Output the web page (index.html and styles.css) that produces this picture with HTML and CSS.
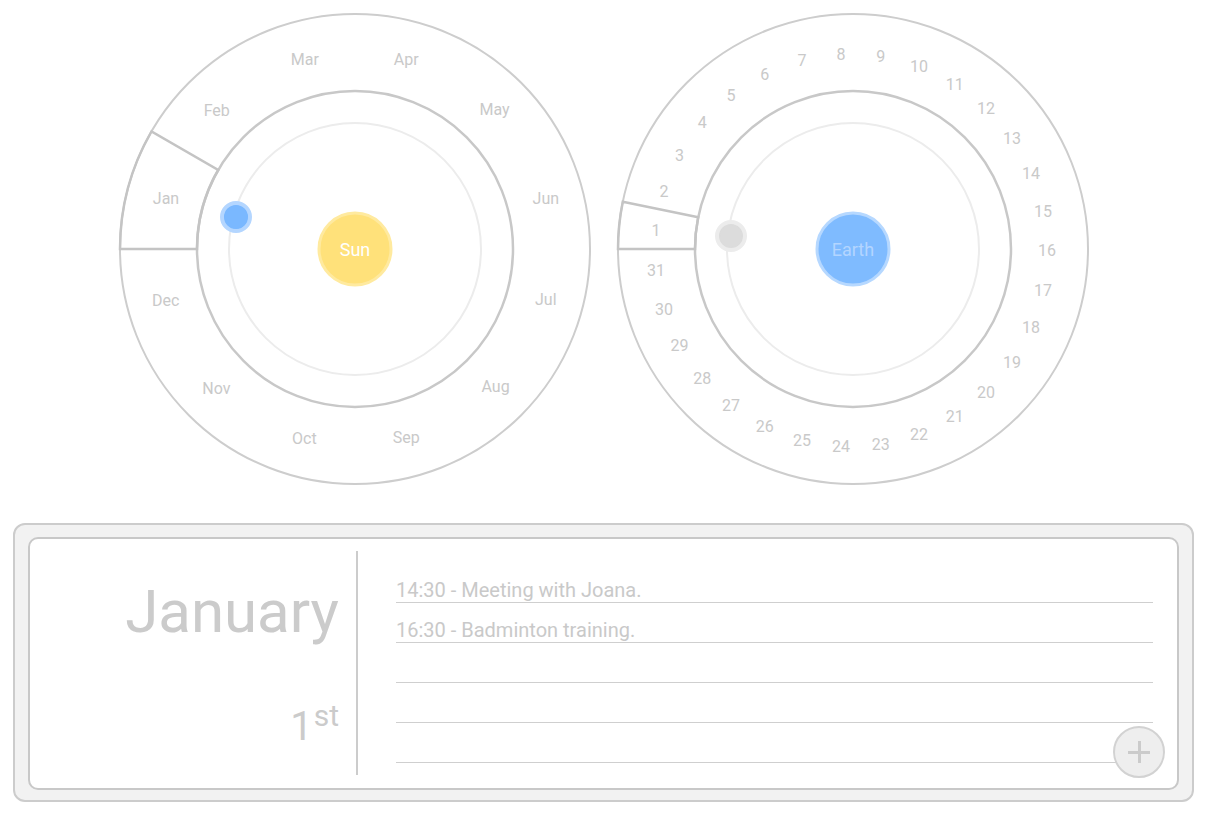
FILE: index.html
```html
<!DOCTYPE html>
<html>
<head>
<meta charset="utf-8">
<link rel="stylesheet" href="styles.css">
</head>
<body>
<div class="orbits">
  <svg class="dial" width="474" height="474" viewBox="-237 -237 474 474">
    <circle class="ring-outer" r="235"/>
    <circle class="ring-inner" r="158"/>
    <circle class="ring-faint" r="126"/>
    <path class="sector" d="M -235 0 A 235 235 0 0 1 -203.52 -117.5 L -136.83 -79 A 158 158 0 0 0 -158 0 Z"/>
    <g class="labels">
      <text x="-189" y="-50.7">Jan</text>
      <text x="-138.3" y="-138.6">Feb</text>
      <text x="-50.2" y="-189.3">Mar</text>
      <text x="51.2" y="-189.3">Apr</text>
      <text x="139.6" y="-139.6">May</text>
      <text x="190.8" y="-50.7">Jun</text>
      <text x="190.8" y="50.7">Jul</text>
      <text x="140.6" y="137.6">Aug</text>
      <text x="51.2" y="188.3">Sep</text>
      <text x="-50.7" y="189.8">Oct</text>
      <text x="-138.6" y="139.1">Nov</text>
      <text x="-189.3" y="51.2">Dec</text>
    </g>
    <circle class="planet-halo" cx="-119" cy="-32" r="14"/>
    <circle class="planet-core" cx="-119" cy="-32" r="11.5"/>
    <circle class="sun" r="36"/>
    <text class="sun-label" x="0" y="0">Sun</text>
  </svg>
  <svg class="dial" width="474" height="474" viewBox="-237 -237 474 474">
    <circle class="ring-outer" r="235"/>
    <circle class="ring-inner" r="158"/>
    <circle class="ring-faint" r="126"/>
    <path class="sector" d="M -235 0 A 235 235 0 0 1 -230.19 -47.30 L -154.77 -31.80 A 158 158 0 0 0 -158 0 Z"/>
    <g class="labels days">
      <text x="-195.0" y="-20.0">1</text>
      <text x="-187.0" y="-58.7">2</text>
      <text x="-171.4" y="-95.1">3</text>
      <text x="-148.7" y="-127.7">4</text>
      <text x="-120.0" y="-155.0">5</text>
      <text x="-86.3" y="-176.0">6</text>
      <text x="-49.1" y="-189.8">7</text>
      <text x="-9.9" y="-195.8">8</text>
      <text x="29.7" y="-193.7">9</text>
      <text x="68.1" y="-183.8">10</text>
      <text x="103.7" y="-166.3">11</text>
      <text x="135.0" y="-142.1">12</text>
      <text x="160.9" y="-112.0">13</text>
      <text x="180.1" y="-77.3">14</text>
      <text x="192.0" y="-39.5">15</text>
      <text x="196" y="0">16</text>
      <text x="192.0" y="39.5">17</text>
      <text x="180.1" y="77.3">18</text>
      <text x="160.9" y="112.0">19</text>
      <text x="135.0" y="142.1">20</text>
      <text x="103.7" y="166.3">21</text>
      <text x="68.1" y="183.8">22</text>
      <text x="29.7" y="193.7">23</text>
      <text x="-9.9" y="195.8">24</text>
      <text x="-49.1" y="189.8">25</text>
      <text x="-86.3" y="176.0">26</text>
      <text x="-120.0" y="155.0">27</text>
      <text x="-148.7" y="127.7">28</text>
      <text x="-171.4" y="95.1">29</text>
      <text x="-187.0" y="58.7">30</text>
      <text x="-195.0" y="20.0">31</text>
    </g>
    <circle class="moon-halo" cx="-122" cy="-13" r="14"/>
    <circle class="moon-core" cx="-122" cy="-13" r="11"/>
    <circle class="earth" r="36"/>
    <text class="earth-label" x="0" y="0">Earth</text>
  </svg>
</div>

<div class="panel">
  <div class="sheet">
    <div class="date-col">
      <div class="month">January</div>
      <div class="day">1<span class="suffix">st</span></div>
    </div>
    <div class="events">
      <div class="event">14:30 - Meeting with Joana.</div>
      <div class="event">16:30 - Badminton training.</div>
      <div class="event"></div>
      <div class="event"></div>
      <div class="event"></div>
    </div>
    <div class="add-btn"><span class="plus-h"></span><span class="plus-v"></span></div>
  </div>
</div>
</body>
</html>
```
FILE: styles.css
```css
html, body {
  margin: 0;
  padding: 0;
  background: #ffffff;
  font-family: Roboto, "Liberation Sans", sans-serif;
}

.orbits {
  display: flex;
  justify-content: center;
  gap: 24px;
  padding-top: 12px;
}

.dial {
  display: block;
  overflow: visible;
}

.ring-outer {
  fill: none;
  stroke: #cdcdcd;
  stroke-width: 2;
}

.ring-inner {
  fill: none;
  stroke: #c8c8c8;
  stroke-width: 2.5;
}

.ring-faint {
  fill: none;
  stroke: #ececec;
  stroke-width: 2;
}

.sector {
  fill: none;
  stroke: #c4c4c4;
  stroke-width: 2.5;
}

.labels text {
  fill: #c9c9c9;
  font-size: 16px;
  text-anchor: middle;
  dominant-baseline: central;
}

.days {
  transform: translate(-2px, 1.5px);
}

.planet-halo {
  fill: #7ab8ff;
  stroke: #b4d6ff;
  stroke-width: 4;
}

.planet-core {
  fill: #7ab8ff;
}

.moon-halo {
  fill: #dcdcdc;
  stroke: #ececec;
  stroke-width: 4;
}

.moon-core {
  fill: #dcdcdc;
}

.sun {
  fill: #ffe17a;
  stroke: #ffea9f;
  stroke-width: 3;
}

.sun-label {
  fill: #ffffff;
  font-size: 18px;
  text-anchor: middle;
  dominant-baseline: central;
}

.earth {
  fill: #7fbbff;
  stroke: #b6d8ff;
  stroke-width: 3;
}

.earth-label {
  fill: #b3d5ff;
  font-size: 18px;
  text-anchor: middle;
  dominant-baseline: central;
}

.panel {
  margin: 37px 13px 0;
  border: 2px solid #cccccc;
  border-radius: 12px;
  background: #f2f2f2;
  padding: 12px 13px 10px 13px;
}

.sheet {
  position: relative;
  display: flex;
  height: 253px;
  box-sizing: border-box;
  border: 2px solid #c8c8c8;
  border-radius: 10px;
  background: #ffffff;
  padding: 12px 0 13px;
}

.date-col {
  flex: none;
  box-sizing: border-box;
  border-right: 2px solid #cccccc;
  width: 328px;
  padding-right: 17px;
  display: flex;
  flex-direction: column;
  align-items: flex-end;
  color: #cbcbcb;
}

.month {
  margin-top: 25px;
  font-size: 60px;
  line-height: 72px;
}

.day {
  margin-top: 55px;
  font-size: 40px;
  line-height: 48px;
  height: 48px;
}

.suffix {
  font-size: 30px;
  line-height: 0;
  vertical-align: 14px;
  margin-left: 1px;
}

.events {
  flex: 1;
  padding: 12px 24px 0 38px;
}

.event {
  height: 40px;
  box-sizing: border-box;
  border-bottom: 1px solid #cfcfcf;
  padding-top: 15px;
  font-size: 20px;
  line-height: 24px;
  color: #c9c9c9;
  white-space: nowrap;
}

.add-btn {
  position: absolute;
  right: 12px;
  bottom: 10px;
  width: 52px;
  height: 52px;
  box-sizing: border-box;
  border: 2px solid #d2d2d2;
  border-radius: 50%;
  background: #eeeeee;
  display: flex;
  align-items: center;
  justify-content: center;
}

.plus-h {
  position: absolute;
  width: 22px;
  height: 3px;
  background: #cbcbcb;
}

.plus-v {
  position: absolute;
  width: 3px;
  height: 22px;
  background: #cbcbcb;
}
```
